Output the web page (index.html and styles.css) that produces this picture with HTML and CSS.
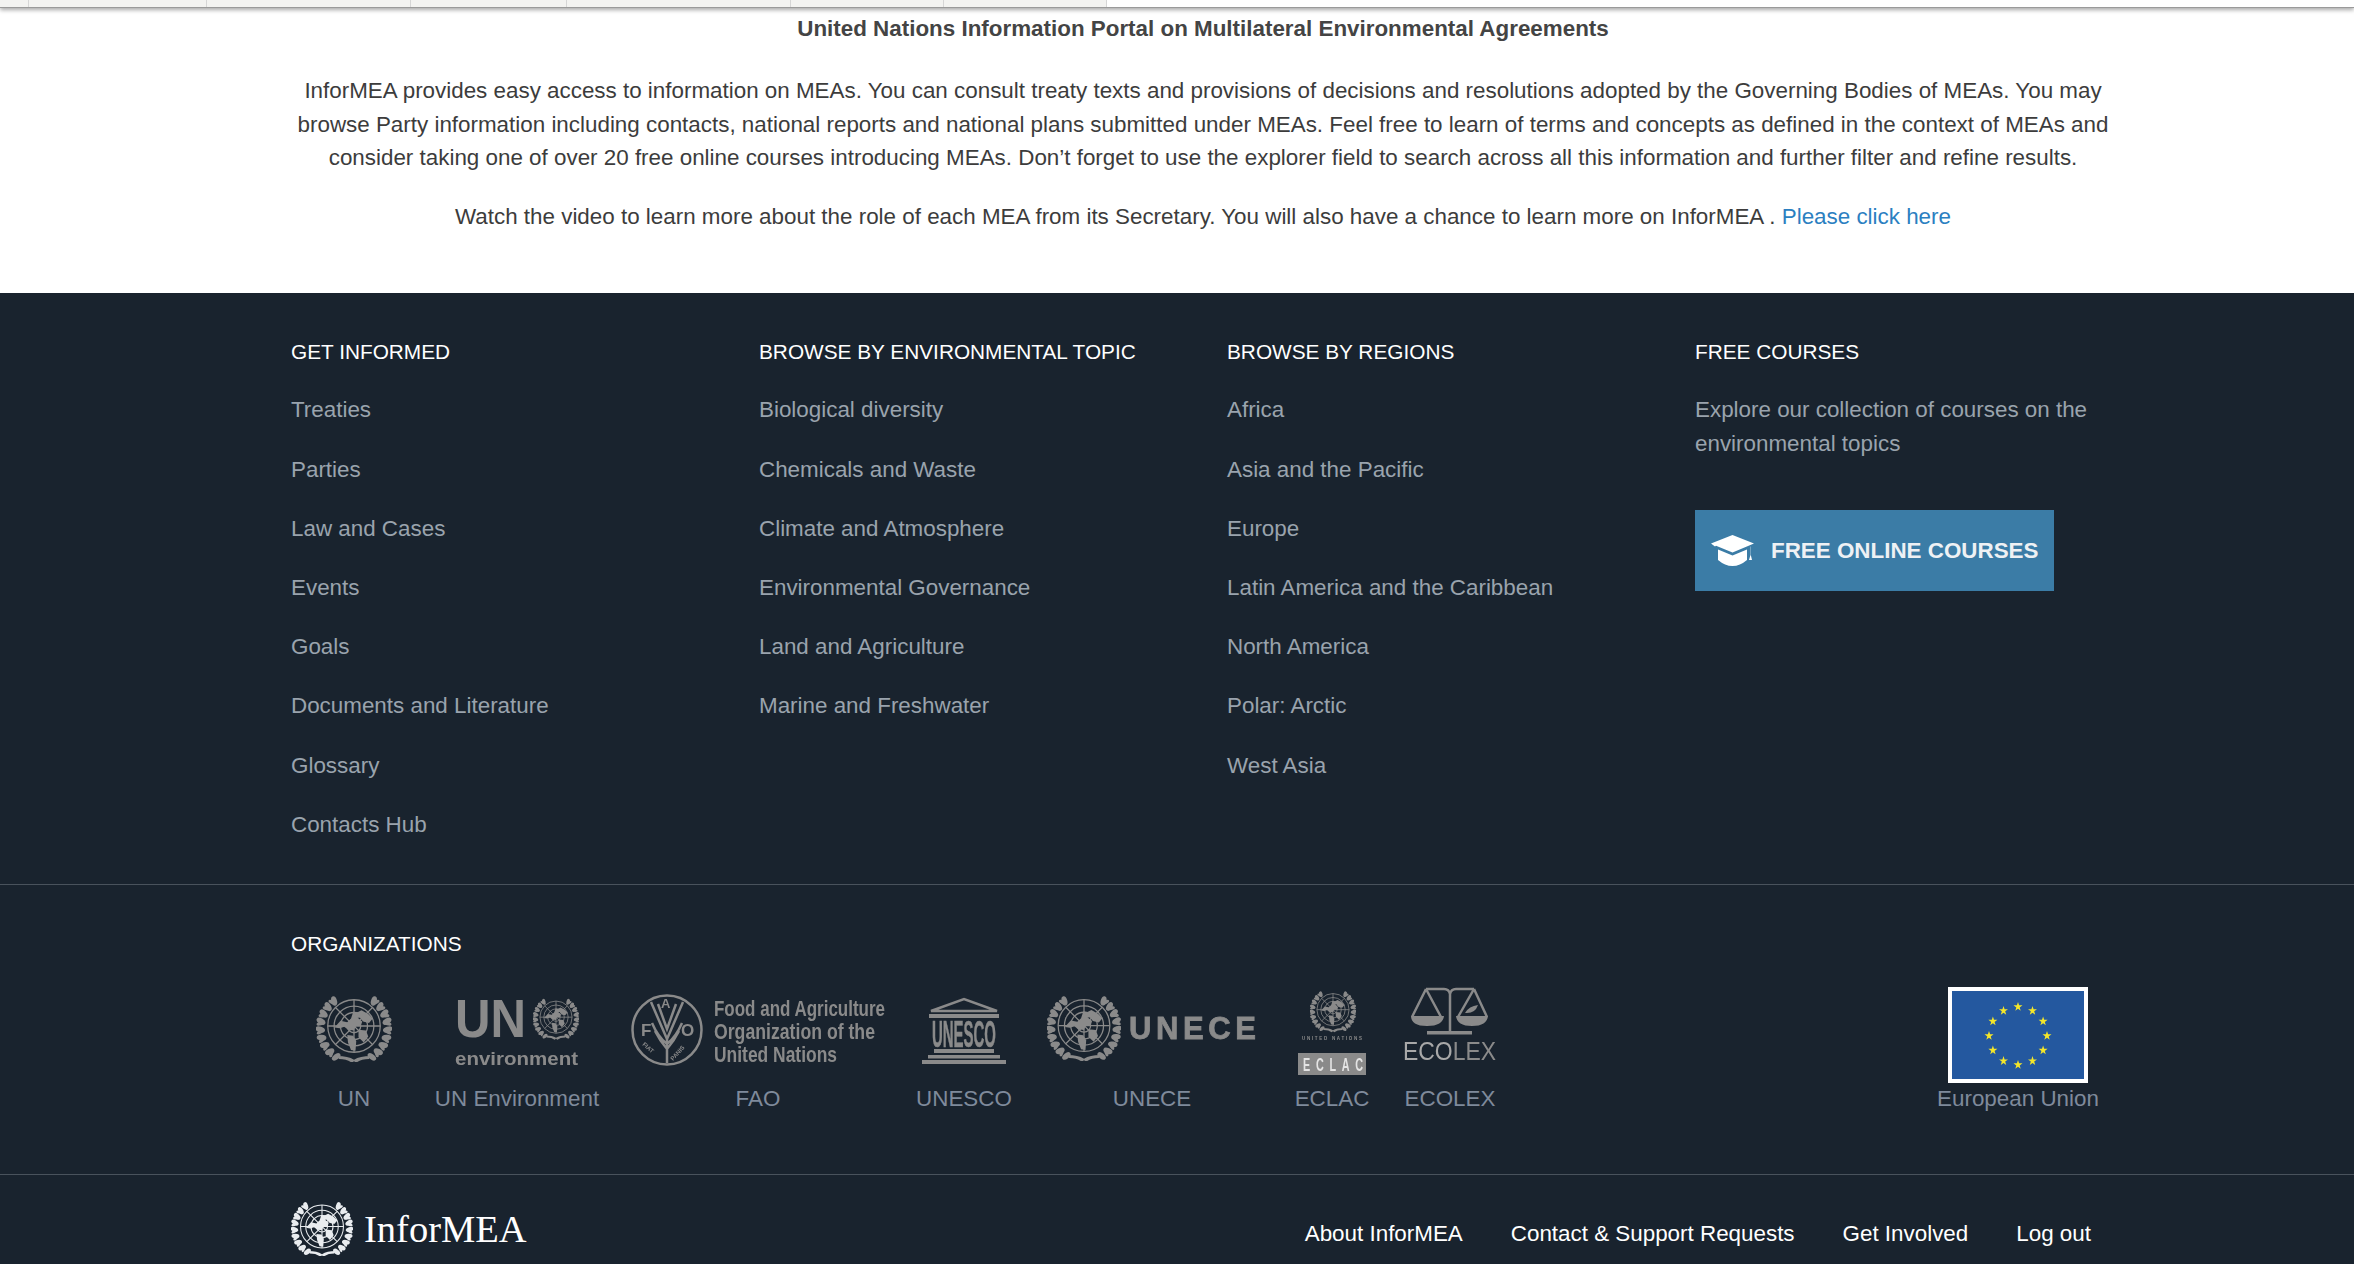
FILE: index.html
```html
<!DOCTYPE html>
<html lang="en">
<head>
<meta charset="utf-8">
<title>InforMEA</title>
<link rel="stylesheet" href="styles.css">
</head>
<body>
<svg class="defs" width="0" height="0" aria-hidden="true">
  <defs>
    <ellipse id="leaf" cx="50" cy="-2" rx="3.800" ry="6.500" transform="rotate(20 50 -2)"/>
    <ellipse id="leafb" cx="50" cy="-2" rx="2.400" ry="5.500" transform="rotate(-24 50 -2)"/>
    <symbol id="un" viewBox="0 0 100 88">
      <g fill="none" stroke="currentColor" stroke-width="1.700">
        <circle cx="50" cy="40" r="35"/>
        <circle cx="50" cy="40" r="26.500"/>
        <circle cx="50" cy="40" r="18"/>
        <circle cx="50" cy="40" r="9"/>
        <path d="M15 40H85M50 5V75M25.300 15.300L74.700 64.700M74.700 15.300L25.300 64.700"/>
      </g>
      <g fill="currentColor">
        <path d="M24 42l8-9 9 2 5-5 3-9 7 1-1 7 6 5-2 6-7 0-2 6-8-1-5-4-6 2z"/>
        <path d="M50 24l10-5 9 5 6 6-5 6-8-2-4-5-8 0z"/>
        <path d="M41 52l8 1 4 7-1 13-6-1-4-10zM56 45l10 1 3 8-6 8-7-7z"/>
        <g id="wreathL">
          <use href="#leaf" transform="rotate(-36 50 43)"/><use href="#leafb" transform="rotate(-40 50 43)"/>
          <use href="#leaf" transform="rotate(-50 50 43)"/><use href="#leafb" transform="rotate(-54 50 43)"/>
          <use href="#leaf" transform="rotate(-64 50 43)"/><use href="#leafb" transform="rotate(-68 50 43)"/>
          <use href="#leaf" transform="rotate(-78 50 43)"/><use href="#leafb" transform="rotate(-82 50 43)"/>
          <use href="#leaf" transform="rotate(-92 50 43)"/><use href="#leafb" transform="rotate(-96 50 43)"/>
          <use href="#leaf" transform="rotate(-106 50 43)"/><use href="#leafb" transform="rotate(-110 50 43)"/>
          <use href="#leaf" transform="rotate(-120 50 43)"/><use href="#leafb" transform="rotate(-124 50 43)"/>
          <use href="#leaf" transform="rotate(-134 50 43)"/><use href="#leafb" transform="rotate(-138 50 43)"/>
          <use href="#leaf" transform="rotate(-148 50 43)"/>
        </g>
        <use href="#wreathL" transform="matrix(-1 0 0 1 100 0)"/>
        <path d="M28 80q14 0 22 5q8-5 22-5l-2 4q-11 0-17 5l-3-2-3 2q-6-5-17-5z"/>
      </g>
    </symbol>
  </defs>
</svg>

<div class="top-bar">
  <span class="top-cell"></span><span class="top-cell"></span><span class="top-cell"></span><span class="top-cell"></span><span class="top-cell"></span><span class="top-cell"></span><span class="top-cell"></span>
</div>

<main class="intro">
  <h2 class="intro-title">United Nations Information Portal on Multilateral Environmental Agreements</h2>
  <p class="intro-text">InforMEA provides easy access to information on MEAs. You can consult treaty texts and provisions of decisions and resolutions adopted by the Governing Bodies of MEAs. You may<br>browse Party information including contacts, national reports and national plans submitted under MEAs. Feel free to learn of terms and concepts as defined in the context of MEAs and<br>consider taking one of over 20 free online courses introducing MEAs. Don’t forget to use the explorer field to search across all this information and further filter and refine results.</p>
  <p class="intro-video">Watch the video to learn more about the role of each MEA from its Secretary. You will also have a chance to learn more on InforMEA . <a href="#">Please click here</a></p>
</main>

<footer class="footer">
  <section class="footer-cols">
    <div class="col">
      <h3 class="col-head">GET INFORMED</h3>
      <ul class="links">
        <li><a href="#">Treaties</a></li><li><a href="#">Parties</a></li><li><a href="#">Law and Cases</a></li><li><a href="#">Events</a></li><li><a href="#">Goals</a></li><li><a href="#">Documents and Literature</a></li><li><a href="#">Glossary</a></li><li><a href="#">Contacts Hub</a></li>
      </ul>
    </div>
    <div class="col">
      <h3 class="col-head">BROWSE BY ENVIRONMENTAL TOPIC</h3>
      <ul class="links">
        <li><a href="#">Biological diversity</a></li><li><a href="#">Chemicals and Waste</a></li><li><a href="#">Climate and Atmosphere</a></li><li><a href="#">Environmental Governance</a></li><li><a href="#">Land and Agriculture</a></li><li><a href="#">Marine and Freshwater</a></li>
      </ul>
    </div>
    <div class="col">
      <h3 class="col-head">BROWSE BY REGIONS</h3>
      <ul class="links">
        <li><a href="#">Africa</a></li><li><a href="#">Asia and the Pacific</a></li><li><a href="#">Europe</a></li><li><a href="#">Latin America and the Caribbean</a></li><li><a href="#">North America</a></li><li><a href="#">Polar: Arctic</a></li><li><a href="#">West Asia</a></li>
      </ul>
    </div>
    <div class="col">
      <h3 class="col-head">FREE COURSES</h3>
      <p class="course-text">Explore our collection of courses on the<br>environmental topics</p>
      <a class="course-btn" href="#">
        <svg class="cap" viewBox="0 0 43 31" width="43" height="31"><path fill="currentColor" d="M21.500 0L43 8.500 21.500 17.500 5 10.800 4 11.500V11.500L0 8.500zM7 14.500L21.500 20.500 36 14.500V25Q29 31 21.500 31T7 25zM39.500 12V20L38 25H41L39.800 20V11z"/></svg>
        <span>FREE ONLINE COURSES</span>
      </a>
    </div>
  </section>

  <section class="orgs">
    <h3 class="col-head">ORGANIZATIONS</h3>
    <div class="org-row">
      <a class="org org-un" href="#">
        <svg class="logo" width="76" height="96" viewBox="0 0 76 96"><use href="#un" x="0" y="9" width="76" height="66"/></svg>
        <span>UN</span>
      </a>
      <a class="org org-env" href="#">
        <svg class="logo" width="124" height="96" viewBox="0 0 124 96">
          <text class="lg-b" x="0" y="50" font-size="53" textLength="71" lengthAdjust="spacingAndGlyphs">UN</text>
          <use href="#un" x="78" y="11" width="46" height="42"/>
          <text class="lg-b" x="0" y="77.500" font-size="18" textLength="123" lengthAdjust="spacingAndGlyphs">environment</text>
        </svg>
        <span>UN Environment</span>
      </a>
      <a class="org org-fao" href="#">
        <svg class="logo" width="254" height="96" viewBox="0 0 254 96">
          <g fill="none" stroke="currentColor">
            <circle cx="36" cy="43" r="34.500" stroke-width="2.500"/>
            <path stroke-width="2.500" d="M36 76V52M20 15L36 52 52 15M27 17L36 42 45 17M21 36Q27 50 36 57 45 50 51 36M24 44Q29 54 36 62 43 54 48 44"/>
          </g>
          <text class="lg-b" x="10" y="49" font-size="17">F</text>
          <text class="lg-b" x="30" y="21" font-size="13">A</text>
          <text class="lg-b" x="50" y="49" font-size="17">O</text>
          <text class="lg-b" font-size="6" transform="translate(11 58) rotate(40)">FIAT</text>
          <text class="lg-b" font-size="6" transform="translate(42 74) rotate(-48)">PANIS</text>
          <text class="lg-b" x="83" y="29" font-size="22" textLength="171" lengthAdjust="spacingAndGlyphs">Food and Agriculture</text>
          <text class="lg-b" x="83" y="52" font-size="22" textLength="161" lengthAdjust="spacingAndGlyphs">Organization of the</text>
          <text class="lg-b" x="83" y="75" font-size="22" textLength="123" lengthAdjust="spacingAndGlyphs">United Nations</text>
        </svg>
        <span>FAO</span>
      </a>
      <a class="org org-unesco" href="#">
        <svg class="logo" width="84" height="96" viewBox="0 0 84 96">
          <path fill="none" stroke="currentColor" stroke-width="2.500" d="M9 24L42 12 75 24Z"/>
          <path fill="currentColor" d="M7 27H77V31H7zM12 62H72V66H12zM6 68H78V71.500H6zM0 73H84V77H0z"/>
          <text class="lg-b lg-thick" x="10" y="60" font-size="37" textLength="64" lengthAdjust="spacingAndGlyphs">UNESCO</text>
        </svg>
        <span>UNESCO</span>
      </a>
      <a class="org org-unece" href="#">
        <svg class="logo" width="210" height="96" viewBox="0 0 210 96">
          <use href="#un" x="0" y="9" width="74" height="65"/>
          <text class="lg-b lg-heavy" x="82" y="52" font-size="31" textLength="127">UNECE</text>
        </svg>
        <span>UNECE</span>
      </a>
      <a class="org org-eclac" href="#">
        <svg class="logo" width="68" height="96" viewBox="0 0 68 96">
          <use href="#un" x="12" y="3" width="46" height="43"/>
          <text class="lg-b" x="4" y="53" font-size="4.500" textLength="60">UNITED NATIONS</text>
          <rect class="lg-fill" x="0" y="66" width="68" height="22"/>
          <text class="lg-dark" font-size="18" textLength="100" transform="translate(5 84) scale(.6 1)">ECLAC</text>
        </svg>
        <span>ECLAC</span>
      </a>
      <a class="org org-ecolex" href="#">
        <svg class="logo" width="94" height="96" viewBox="0 0 94 96">
          <path fill="none" stroke="currentColor" stroke-width="2.500" d="M47 6V46M23 2H41Q46 2 47 7 48 2 53 2H71M23 2L9 30M23 2L38 30M71 2L55 30M71 2L84 30"/>
          <path fill="currentColor" d="M24 44H69V47.500H24zM8 29H41Q40 39 24 39T8 29zM53 29H85Q84 39 69 39T53 29zM62 26Q66 19 75 18 72 27 62 26z"/>
          <text class="lg-r" x="0" y="73" font-size="25" textLength="93" lengthAdjust="spacingAndGlyphs"><tspan class="lg-eco">ECO</tspan>LEX</text>
        </svg>
        <span>ECOLEX</span>
      </a>
      <a class="org org-eu" href="#">
        <svg class="logo flag" width="140" height="96" viewBox="0 0 140 96">
          <rect x="2" y="2" width="136" height="92" fill="#24589f" stroke="#fff" stroke-width="4"/>
          <g fill="#f4e62a">
            <path id="star" d="M70 15l1.100 3.300h3.400l-2.800 2.100 1 3.400-2.700-2-2.700 2 1-3.400-2.800-2.100h3.400z"/>
            <use href="#star" x="14.500" y="3.900"/><use href="#star" x="25.100" y="14.500"/><use href="#star" x="29" y="29"/><use href="#star" x="25.100" y="43.500"/><use href="#star" x="14.500" y="54.100"/><use href="#star" x="0" y="58"/><use href="#star" x="-14.500" y="54.100"/><use href="#star" x="-25.100" y="43.500"/><use href="#star" x="-29" y="29"/><use href="#star" x="-25.100" y="14.500"/><use href="#star" x="-14.500" y="3.900"/>
          </g>
        </svg>
        <span>European Union</span>
      </a>
    </div>
  </section>

  <section class="bottom">
    <a class="brand" href="#">
      <svg class="brand-logo" width="62" height="54"><use href="#un" width="62" height="54"/></svg>
      <span>InforMEA</span>
    </a>
    <nav class="bottom-nav">
      <a href="#">About InforMEA</a><a href="#">Contact &amp; Support Requests</a><a href="#">Get Involved</a><a href="#">Log out</a>
    </nav>
  </section>
</footer>
</body>
</html>
```
FILE: styles.css
```css
* { box-sizing: border-box; }
html, body { margin: 0; padding: 0; }
body {
  display: flex;
  flex-direction: column;
  height: 1264px;
  overflow: hidden;
  background: #fff;
  font-family: "Liberation Sans", Arial, sans-serif;
  font-size: 22.4px;
  color: #3c3c3c;
}
a { text-decoration: none; color: inherit; }
.defs { position: absolute; }

.top-bar {
  display: grid;
  flex: none;
  grid-template-columns: 29px 178px 204px 156px 224px 153px 163px 1fr;
  height: 8px;
  background: #fff;
  border-bottom: 1px solid #9a9a9a;
  box-shadow: 0 2px 4px rgba(0, 0, 0, .35);
}
.top-cell { background: #f3f3f1; border-right: 1px solid #d6d6d6; }

.intro { flex: none; padding: 4px 0 60px 52px; text-align: center; line-height: 33.6px; }
.intro-title { margin: 0 0 28px; font-size: 22.4px; font-weight: 700; line-height: 34px; color: #444; }
.intro-text { margin: 0 0 25px; }
.intro-video { margin: 0; }
.intro-video a { color: #2b7fc1; }

.footer { flex: 1; background: #19232e; color: #9aa3ad; }
.footer-cols {
  display: grid;
  grid-template-columns: repeat(4, 468px);
  padding: 42px 0 42px 291px;
  border-bottom: 1px solid #49525c;
}
.col-head {
  margin: 0;
  font-size: 20.8px;
  font-weight: 400;
  line-height: 34px;
  color: #fff;
}
.links { list-style: none; margin: 24px 0 0; padding: 0; }
.links li { line-height: 34px; margin-bottom: 25.2px; }
.links li:last-child { margin-bottom: 0; }
.course-text { margin: 24px 0 0; line-height: 34px; }
.course-btn {
  display: flex;
  align-items: center;
  gap: 17px;
  width: 359px;
  height: 81px;
  margin-top: 49px;
  padding-left: 16px;
  background: #3b7ca6;
  color: #eef1f4;
  font-weight: 700;
}
.cap { display: block; flex: none; color: #fff; }

.orgs { padding: 42px 246px 60px 291px; border-bottom: 1px solid #49525c; }
.org-row { display: flex; margin-top: 26px; }
.org {
  display: flex;
  flex-direction: column;
  align-items: center;
  flex: none;
  color: #7f8a9b;
  line-height: 30px;
}
.org span { white-space: nowrap; }
.org-un { width: 126px; }
.org-env { width: 200px; }
.org-fao { width: 282px; }
.org-unesco { width: 130px; }
.org-unece { width: 246px; }
.org-eclac { width: 114px; }
.org-ecolex { width: 122px; }
.org-eu { width: 180px; margin-left: auto; }
.logo { display: block; color: #8a8a8a; margin-bottom: 1px; overflow: visible; filter: blur(.45px); }
.flag { filter: blur(.3px); }
.lg-b, .lg-r, .lg-dark { font-family: "Liberation Sans", Arial, sans-serif; fill: currentColor; }
.lg-b { font-weight: 700; }
.lg-heavy { stroke: currentColor; stroke-width: .8px; }
.lg-thick { stroke: currentColor; stroke-width: .6px; }
.lg-eco { fill: #a8a8a8; }
.lg-fill { fill: currentColor; }
.lg-dark { fill: #e4e4e4; font-weight: 700; }

.bottom {
  display: flex;
  justify-content: space-between;
  align-items: flex-start;
  padding: 27px 263px 0 291px;
}
.brand {
  display: flex;
  align-items: center;
  gap: 11px;
  color: #fff;
  font-family: "Liberation Serif", "Times New Roman", serif;
  font-size: 38.5px;
  line-height: 54px;
}
.brand-logo { display: block; color: #e9ecef; }
.bottom-nav {
  display: flex;
  gap: 48px;
  padding-top: 15px;
  color: #fff;
  line-height: 34px;
}
```
